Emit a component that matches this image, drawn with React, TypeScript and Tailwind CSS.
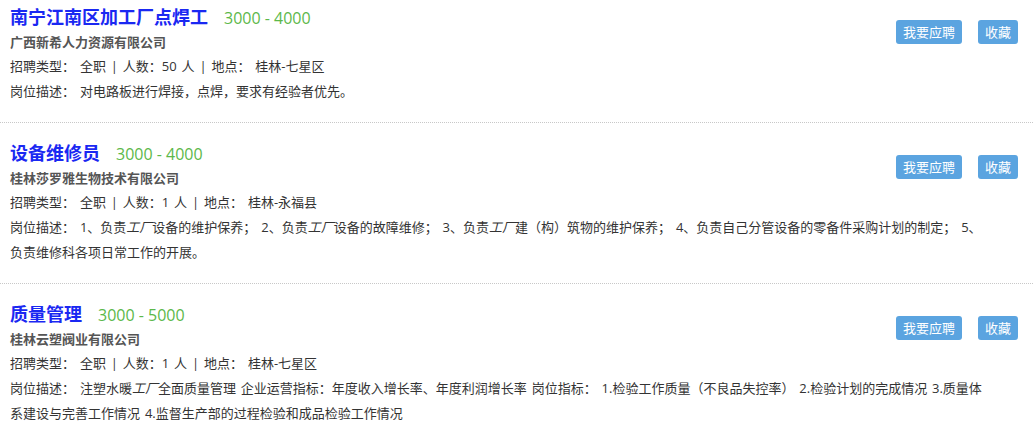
const FONT = "font-['Open_Sans','Noto_Sans_CJK_SC',sans-serif]"

interface Job {
  title: string
  salary: string
  company: string
  count: string
  place: string
  desc: React.ReactNode
}

const F = () => <em className="italic">工厂</em>

const JOBS: Job[] = [
  {
    title: '南宁江南区加工厂点焊工',
    salary: '3000 - 4000',
    company: '广西新希人力资源有限公司',
    count: '50',
    place: '桂林-七星区',
    desc: <>对电路板进行焊接，点焊，要求有经验者优先。</>,
  },
  {
    title: '设备维修员',
    salary: '3000 - 4000',
    company: '桂林莎罗雅生物技术有限公司',
    count: '1',
    place: '桂林-永福县',
    desc: (
      <>
        1、负责<F />设备的维护保养； 2、负责<F />设备的故障维修； 3、负责<F />建（构）筑物的维护保养； 4、负责自己分管设备的零备件采购计划的制定； 5、
        <br />
        负责维修科各项日常工作的开展。
      </>
    ),
  },
  {
    title: '质量管理',
    salary: '3000 - 5000',
    company: '桂林云塑阀业有限公司',
    count: '1',
    place: '桂林-七星区',
    desc: (
      <>
        注塑水暖<F />全面质量管理 企业运营指标：年度收入增长率、年度利润增长率 岗位指标： 1.检验工作质量（不良品失控率） 2.检验计划的完成情况 3.质量体
        <br />
        系建设与完善工作情况 4.监督生产部的过程检验和成品检验工作情况
      </>
    ),
  },
]

function JobItem({ job, first }: { job: Job; first: boolean }) {
  return (
    <div className={`${first ? 'pt-[4px]' : 'pt-[17px] border-t border-dotted border-[#c8c8c8]'} pb-[18px] pl-[10px] pr-[15px] flow-root`}>
      <div className={`float-right ${first ? 'mt-[16px]' : 'mt-[15px]'} flex gap-4`}>
        <button className="h-6 rounded-[3px] bg-[#5ba4e0] px-[7px] text-[13px] leading-6 text-white">我要应聘</button>
        <button className="h-6 rounded-[3px] bg-[#5ba4e0] px-[7px] text-[13px] leading-6 text-white">收藏</button>
      </div>
      <div className="flex items-baseline h-[26px] leading-[26px]">
        <span className="text-[18px] font-bold text-[#1a28f2]">{job.title}</span>
        <span className="ml-[16px] text-[16px] text-[#5cb84a]">{job.salary}</span>
      </div>
      <div className="text-[13px] font-bold leading-6 text-[#555]">{job.company}</div>
      <div className="text-[13px] leading-[25px] text-[#333] [word-spacing:1.5px]">
        招聘类型：&nbsp;全职 | 人数：{job.count} 人 | 地点：&nbsp;{job.place}
      </div>
      <div className="text-[13px] leading-[25px] text-[#333] [word-spacing:1.5px]">岗位描述：&nbsp;{job.desc}</div>
    </div>
  )
}

export default function App() {
  return (
    <div className={`${FONT} w-[1033px] h-[435px] overflow-hidden bg-white`}>
      {JOBS.map((j, i) => (
        <JobItem key={j.title} job={j} first={i === 0} />
      ))}
    </div>
  )
}
